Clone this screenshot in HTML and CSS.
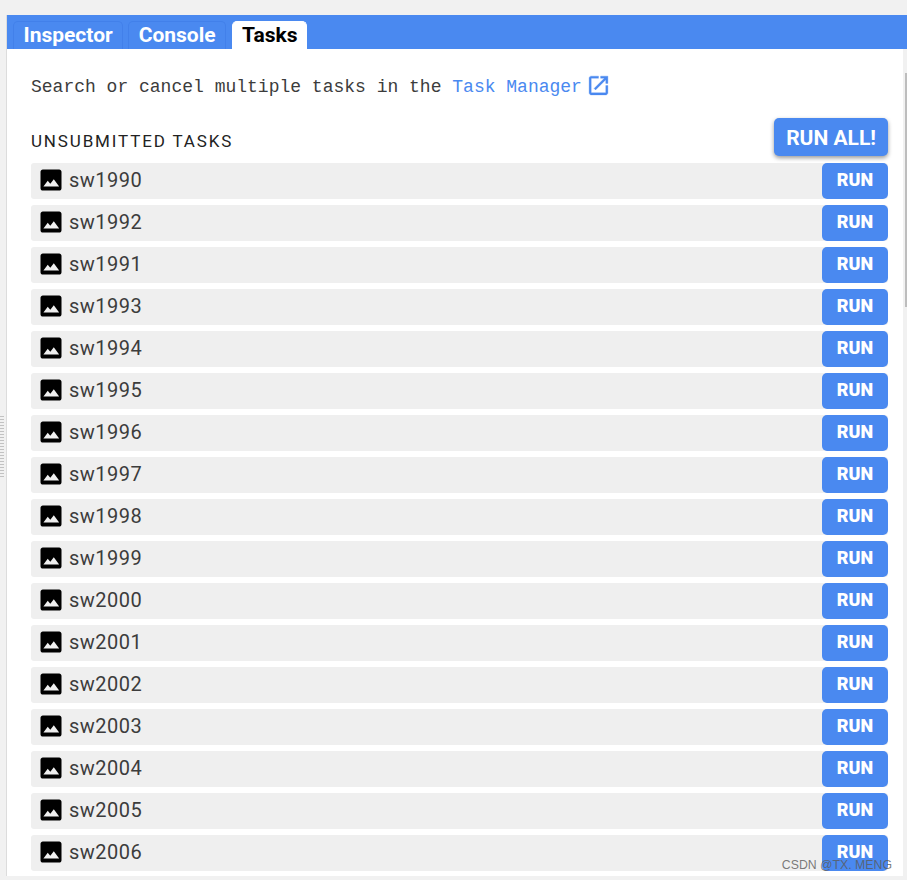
FILE: index.html
```html
<!DOCTYPE html>
<html>
<head>
   <meta charset="UTF-8">
   <title>Tasks</title>
   <link rel="stylesheet" href="styles.css">
</head>
<body>
<div class="gutter">
   <div class="grip"></div>
</div>
<div class="panel">
   <div class="tab-bar">
      <div class="tab">Inspector</div>
      <div class="tab">Console</div>
      <div class="tab tab-active">Tasks</div>
   </div>
   <div class="content-wrap">
      <div class="content">
         <div class="intro">
            <span class="intro-text">Search or cancel multiple tasks in the <a class="link">Task Manager</a></span>
            <svg class="link-icon" viewBox="0 0 24 24"><path d="M19 19H5V5h7V3H5c-1.11 0-2 .9-2 2v14c0 1.1.89 2 2 2h14c1.1 0 2-.9 2-2v-7h-2v7zM14 3v2h3.59l-9.83 9.83 1.41 1.41L19 6.41V10h2V3h-7z"/></svg>
         </div>
         <div class="section-head">
            <span class="section-title">UNSUBMITTED TASKS</span>
            <button class="run-all">RUN ALL!</button>
         </div>
         <svg class="defs"><symbol id="image-icon" viewBox="0 0 24 24"><path d="M21 19V5c0-1.1-.9-2-2-2H5c-1.100 0-2 .9-2 2v14c0 1.100.9 2 2 2h14c1.100 0 2-.9 2-2zM5.500 17.500L9.200 12.600l2.200 2.600 3-3.900 4.600 6.200z"/></symbol></svg>
         <div class="task"><svg class="task-icon"><use href="#image-icon"/></svg><span class="task-name">sw1990</span><button class="run">RUN</button></div>
         <div class="task"><svg class="task-icon"><use href="#image-icon"/></svg><span class="task-name">sw1992</span><button class="run">RUN</button></div>
         <div class="task"><svg class="task-icon"><use href="#image-icon"/></svg><span class="task-name">sw1991</span><button class="run">RUN</button></div>
         <div class="task"><svg class="task-icon"><use href="#image-icon"/></svg><span class="task-name">sw1993</span><button class="run">RUN</button></div>
         <div class="task"><svg class="task-icon"><use href="#image-icon"/></svg><span class="task-name">sw1994</span><button class="run">RUN</button></div>
         <div class="task"><svg class="task-icon"><use href="#image-icon"/></svg><span class="task-name">sw1995</span><button class="run">RUN</button></div>
         <div class="task"><svg class="task-icon"><use href="#image-icon"/></svg><span class="task-name">sw1996</span><button class="run">RUN</button></div>
         <div class="task"><svg class="task-icon"><use href="#image-icon"/></svg><span class="task-name">sw1997</span><button class="run">RUN</button></div>
         <div class="task"><svg class="task-icon"><use href="#image-icon"/></svg><span class="task-name">sw1998</span><button class="run">RUN</button></div>
         <div class="task"><svg class="task-icon"><use href="#image-icon"/></svg><span class="task-name">sw1999</span><button class="run">RUN</button></div>
         <div class="task"><svg class="task-icon"><use href="#image-icon"/></svg><span class="task-name">sw2000</span><button class="run">RUN</button></div>
         <div class="task"><svg class="task-icon"><use href="#image-icon"/></svg><span class="task-name">sw2001</span><button class="run">RUN</button></div>
         <div class="task"><svg class="task-icon"><use href="#image-icon"/></svg><span class="task-name">sw2002</span><button class="run">RUN</button></div>
         <div class="task"><svg class="task-icon"><use href="#image-icon"/></svg><span class="task-name">sw2003</span><button class="run">RUN</button></div>
         <div class="task"><svg class="task-icon"><use href="#image-icon"/></svg><span class="task-name">sw2004</span><button class="run">RUN</button></div>
         <div class="task"><svg class="task-icon"><use href="#image-icon"/></svg><span class="task-name">sw2005</span><button class="run">RUN</button></div>
         <div class="task"><svg class="task-icon"><use href="#image-icon"/></svg><span class="task-name">sw2006</span><button class="run">RUN</button></div>
      </div>
      <div class="scrollbar"><div class="scroll-thumb"></div></div>
   </div>
</div>
<div class="watermark">CSDN @TX. MENG</div>
</body>
</html>
```

FILE: styles.css
```css
html, body {
   height: 100%;
   margin: 0;
}

body {
   display: flex;
   box-sizing: border-box;
   height: 880px;
   padding: 15px 0 4px;
   overflow: hidden;
   background-color: #f1f1f1;
   font-family: Roboto, sans-serif;
}

.gutter {
   display: flex;
   align-items: center;
   flex: none;
   width: 6px;
}

.grip {
   width: 4px;
   height: 62px;
   background-image: radial-gradient(circle, #c2c2c2 0.8px, transparent 1px);
   background-size: 2px 3px;
}

.panel {
   display: flex;
   flex-direction: column;
   flex: 1;
   min-width: 0;
   border-left: 1px solid #dcdcdc;
}

.tab-bar {
   display: flex;
   align-items: flex-end;
   flex: none;
   gap: 5px;
   height: 34px;
   padding-left: 6px;
   background-color: #4a89f0;
}

.tab {
   height: 27px;
   padding: 0 9.500px;
   border: 1px solid #4280ea;
   border-bottom: none;
   border-radius: 5px 5px 0 0;
   color: #fff;
   font-size: 21px;
   font-weight: 700;
   line-height: 26px;
}

.tab-active {
   margin-left: 1.400px;
   padding: 0 8.500px;
   border-color: #fff;
   background-color: #fff;
   color: #000;
}

.content-wrap {
   display: flex;
   flex: 1;
   min-height: 0;
}

.content {
   flex: 1;
   min-width: 0;
   padding: 0 15px 0 24px;
   overflow: hidden;
   background-color: #fff;
}

.intro {
   display: flex;
   align-items: center;
   height: 25px;
   padding-top: 24px;
   color: #3c3c3c;
   font-family: "Liberation Mono", monospace;
   font-size: 18px;
   white-space: pre;
}

.intro-text {
   padding-top: 2px;
}

.link {
   color: #4a89f0;
}

.link-icon {
   flex: none;
   width: 25px;
   height: 25px;
   margin-left: 4px;
   fill: #4a89f0;
   stroke: #4a89f0;
   stroke-width: 0.300;
}

.section-head {
   display: flex;
   align-items: flex-start;
   justify-content: space-between;
   height: 45px;
   margin-top: 20px;
}

.section-title {
   margin-top: 13px;
   color: #222;
   font-size: 17px;
   font-weight: 400;
   letter-spacing: 1.850px;
}

.run-all {
   height: 38px;
   padding: 2px 12px 0;
   border: none;
   border-radius: 5px;
   background-color: #4a89f0;
   box-shadow: 0 2px 4px rgba(0, 0, 0, 0.4);
   color: #fff;
   font-family: Roboto, sans-serif;
   font-size: 21px;
   font-weight: 700;
}

.defs {
   display: none;
}

.task {
   display: flex;
   align-items: center;
   height: 36px;
   margin-bottom: 6px;
   padding-left: 6px;
   border-radius: 3px;
   background-color: #efefef;
}

.task-icon {
   flex: none;
   width: 28px;
   height: 28px;
   margin-bottom: 3px;
}

.task-name {
   flex: 1;
   margin-left: 4px;
   padding-bottom: 3px;
   color: #3c3c3c;
   font-size: 20px;
   letter-spacing: 0.500px;
}

.run {
   flex: none;
   width: 66px;
   height: 36px;
   padding: 0 0 4px;
   border: none;
   border-radius: 5px;
   background-color: #4a89f0;
   color: #fff;
   font-family: Roboto, sans-serif;
   font-size: 18px;
   font-weight: 900;
}

.scrollbar {
   flex: none;
   width: 4px;
   padding-top: 24px;
   background-color: #f1f1f1;
}

.scroll-thumb {
   width: 2px;
   height: 234px;
   margin-left: 2px;
   background-color: #bdbdbd;
}

.watermark {
   position: absolute;
   top: 858px;
   right: 15px;
   color: rgba(90, 90, 90, 0.8);
   font-family: "Liberation Sans", sans-serif;
   font-size: 12.300px;
}
```
